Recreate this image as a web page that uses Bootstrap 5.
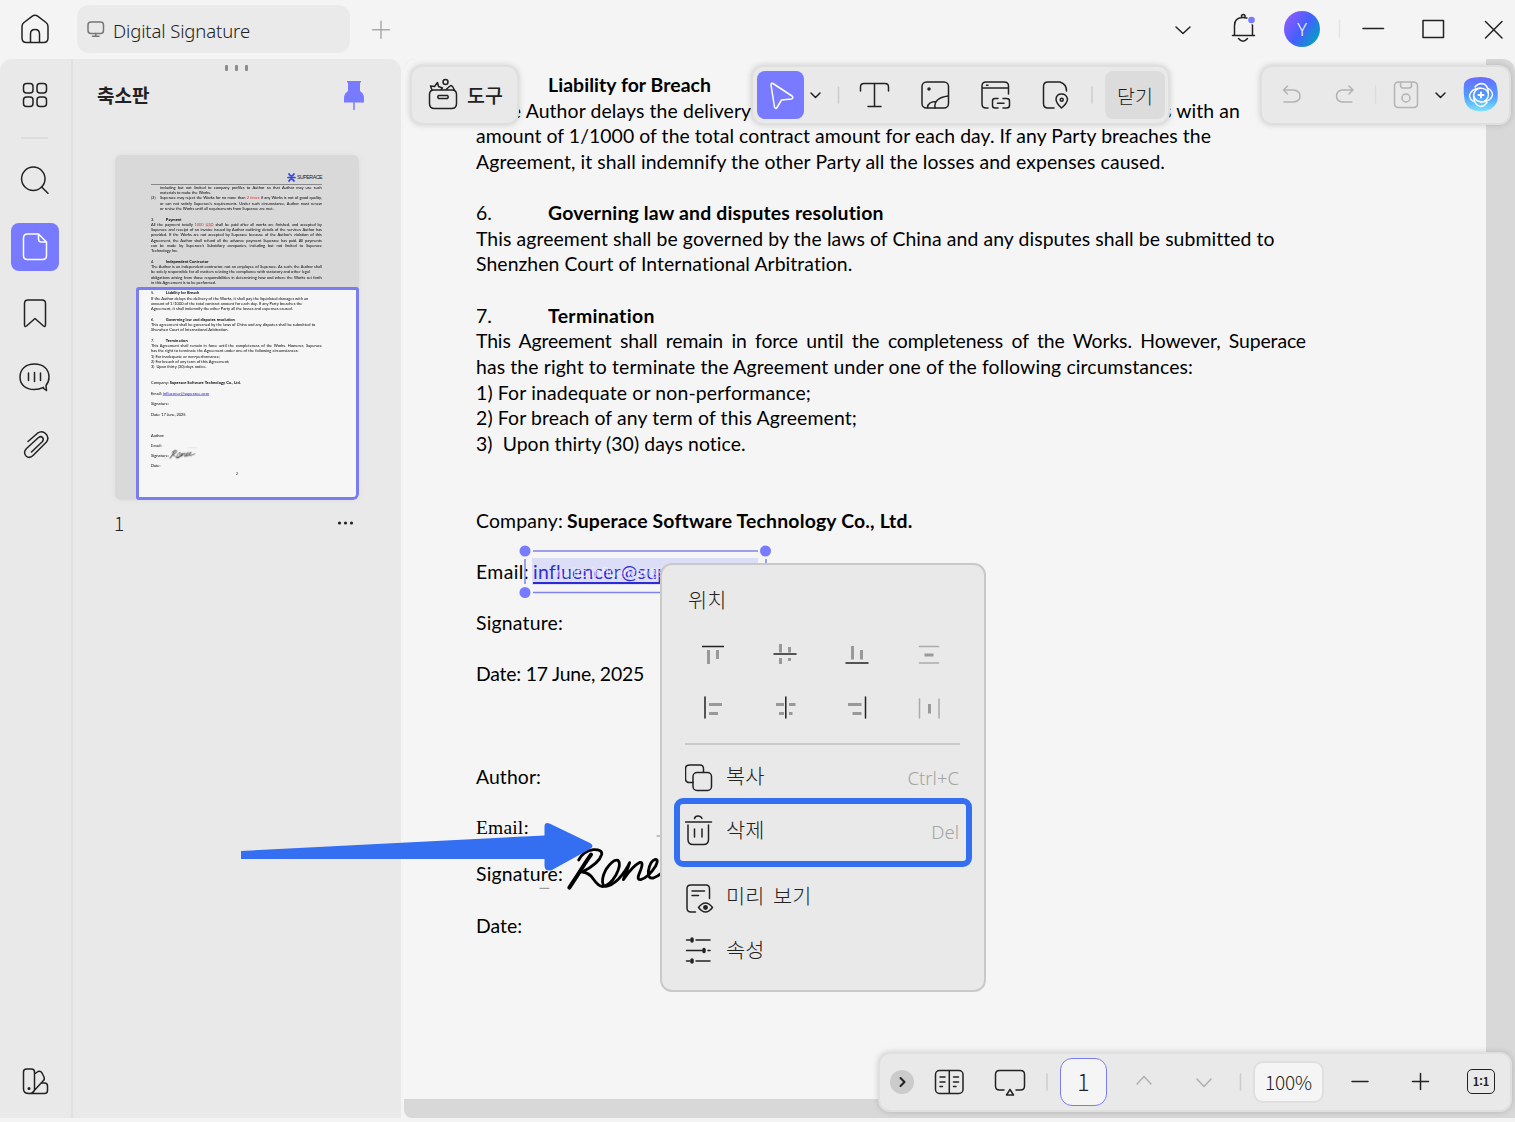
<!DOCTYPE html>
<html lang="ko">
<head>
<meta charset="utf-8">
<title>Digital Signature</title>
<link href="https://cdn.jsdelivr.net/npm/bootstrap@5.3.0/dist/css/bootstrap.min.css" rel="stylesheet">
<style>
body{background:#f4f4f4;color:#222;font-family:"Noto Sans","Noto Sans CJK KR",sans-serif;width:1515px;height:1122px;overflow:hidden}
svg{display:block;flex:none;fill:none;stroke:#222;stroke-width:1.5;stroke-linecap:round;stroke-linejoin:round}
.ko{font-family:"Noto Sans CJK KR",sans-serif}
.titlebar{height:59px}
.home{margin-left:18px}
.tab-pill{width:273px;height:48px;border-radius:12px;background:#eaeaea;margin:5px 16px 0 26px;padding-left:10px}
.tab-name{font-family:"Noto Sans","Open Sans",sans-serif;font-weight:300;font-size:18.5px;margin-left:8px;padding-top:3px}
.avatar{width:36px;height:36px;margin:11px 0 0 11px;background:linear-gradient(125deg,#a05cff 0,#465eff 50%,#00a4bd 90%);font-size:18px;font-weight:300}
.bell{margin-left:10px}
.fit{display:inline-block;white-space:nowrap}
.workspace{height:1059px}
.side{width:401px;background:#e9e9e9;border-radius:12px 12px 0 0}
.rail{width:73px;border-right:2px solid #e1e1e1}
.rail hr{width:27px;height:2px;border:0;background:#dcdcdc;opacity:1;margin:18px 0 17px 21px}
.rail svg{margin-left:11px}
.tool-on{background:#787bff;border-radius:8px}
.tool-on svg,.rail svg.tool-on{stroke:#fff}
.grips{height:18px;gap:7px;padding-right:2px;margin-bottom:1px}
.grips i{width:3px;height:6px;border-radius:1px;background:#8c8c8c}
.panel-head{width:328px;height:36px;padding:0 36px 0 24px;font-size:19px;font-weight:600}
.panel-head span{position:relative;top:-1px}
.thumb{width:244px;height:345px;margin:41px 0 0 42px;background:#d9d9d9;border-radius:6px;box-shadow:0 0 6px rgba(0,0,0,.05);position:relative;overflow:hidden}
.viewport-box{position:absolute;left:21px;top:132px;width:223px;height:213px;border:3px solid #7a7df0;border-radius:3px 3px 6px 3px;background:#f6f6f6}
.mini{position:absolute!important;left:36px;top:29.5px;width:830px;transform:scale(.2058);transform-origin:0 0}
.mini-logo{position:absolute;left:36px;top:17px;width:171px;height:13px;border-bottom:1px solid #888;font:5.3px "Liberation Sans",sans-serif;color:#222}
.thumb-foot{width:244px;margin:5px 0 0 41px;padding-right:4px;height:36px;font-size:19px;font-weight:300}
.stage{flex:1;margin-left:3px;background:#d8d8d8;position:relative;border-radius:12px 12px 0 8px}
.sheet{width:1082px;height:1040px;background:#f5f5f5;padding:14px 0 0 72px;border-radius:12px 0 0 0}
.doc{font-family:Lato,Carlito,sans-serif;font-size:19.4px;color:#000;position:relative;width:830px}
.ln{height:25.63px;line-height:24.4px;white-space:nowrap}
.num{display:inline-block;width:72px}
.just{text-align-last:justify;white-space:normal;letter-spacing:-.12px}
.ind{margin-left:44px}
.serif{font-family:"Liberation Serif",serif;font-size:19.5px}
.maillink{color:#1a17c9;text-decoration:underline;text-decoration-thickness:1.5px;text-underline-offset:3px;margin-left:4px}
.ink{position:absolute;left:-246px;top:737px;overflow:visible}
.pageno{position:absolute;left:413px;top:878px;font-size:16px}
.red{color:#e22b2b}
.bar{position:absolute;background:#e9e9e9;border:2px solid #dfdfdf;border-radius:12px;box-shadow:0 0 6px rgba(0,0,0,.16);height:60px}
.bar>*{margin-top:-1px}
.bar-tools{left:6px;top:6px;width:109px}
.bar-edit{left:347px;top:6px;width:419px}
.bar-right{left:856px;top:6px;width:251px}
.bar-view{left:474px;top:993px;width:634px}
.bar-tools span{font-size:19.5px;margin-left:1px}
.close-btn{width:60px;height:48px;border-radius:8px;background:#dcdcdc;font-size:19.5px;font-weight:300;margin-left:6px}
.close-btn b{font-weight:300;position:relative;top:1px}
.page-box{width:47px;height:48px;border:1.5px solid #7a7df0;border-radius:12px;background:#f5f5f5;font-size:23px;font-weight:300}
.zoom-box{width:71px;height:42px;border:2px solid #dfdfdf;border-radius:10px;background:#f5f5f5;font-size:19px;font-weight:300}
.zoom-box b{font-weight:300;position:relative;top:1px}
.one-box{width:28px;height:25px;border:1.7px solid #222;border-radius:5px;font-size:11px;font-weight:700;line-height:1;margin-left:1px}
.sel{position:absolute;left:113px;top:484px}
.ghost{position:absolute;left:148px;top:506px;font-size:12px;color:#f0f0ff;opacity:.85;line-height:16px}
.ctx{position:absolute;left:256px;top:504px;width:326px;height:429px;background:#e9e9e9;border:2px solid #c9c9c9;border-radius:12px;font-family:"Noto Sans CJK KR",sans-serif;font-weight:300;font-size:20.8px;padding:0 24px 0 23px}
.ctx-title{height:72px;padding:0 0 2px 3px}
.ctx-row{height:36px;margin-bottom:18px;padding-left:9px;gap:34px}
.ctx hr{margin:-2px 0 5px;border:0;height:2px;background:#cacaca;opacity:1}
.ctx-item{height:54px}
.ctx-item span{padding-bottom:3px}
.ctx-item kbd{font:300 18.5px "Noto Sans","Open Sans",sans-serif;background:none;color:#a4a4a4;padding:0 1px 0 0}
.focus-frame{position:absolute;left:270px;top:739px;width:298px;height:69px;border:6px solid #356ff1;border-radius:9px}
.arrow{position:absolute;left:-164px;top:761px}
</style>
<script src="https://cdn.jsdelivr.net/npm/bootstrap@5.3.0/dist/js/bootstrap.bundle.min.js"></script>
</head>
<body>
<header class="titlebar d-flex">
  <svg class="home" width="33" height="59" viewBox="18 0 33 59"><path d="M22 26.500Q22 24 24 22.500L32 16.300Q35 14.200 38 16.300L46 22.500Q48 24 48 26.500V38Q48 42.500 43.500 42.500H26.500Q22 42.500 22 38ZM30.500 42V34Q30.500 29.500 35 29.500T39.500 34V42"/></svg>
  <div class="tab-pill d-flex align-items-center">
    <svg width="18" height="48" viewBox="87 5 18 48"><rect x="88" y="22" width="15.500" height="11.500" rx="3" stroke="#777"/><path d="M95.700 33.500V36M92.500 36.300H99" stroke="#777"/></svg>
    <span class="fit tab-name" data-w="137">Digital Signature</span>
  </div>
  <svg width="30" height="59" viewBox="366 0 30 59"><path d="M372.500 29.800H389.500M381 21.300V38.300" stroke="#aaa"/></svg>
  <div class="ms-auto d-flex">
    <svg width="40" height="59" viewBox="1163 0 40 59"><path d="M1176 27L1183 33.500L1190 27"/></svg>
    <svg class="bell" width="60" height="59" viewBox="1213 0 60 59"><path d="M1234.500 35V25.500Q1234.500 17.500 1243 17.500T1252.500 25.500V35M1232.500 35.500H1254.500M1241.500 17V15.500Q1243.300 13.500 1245 15.500V17M1238.500 38.500Q1243 44 1247.500 38.500"/><circle cx="1251.500" cy="20" r="4.500" fill="#f4f4f4" stroke="none"/><circle cx="1251.500" cy="20" r="3.300" fill="#787bff" stroke="none"/></svg>
    <span class="avatar rounded-circle d-flex align-items-center justify-content-center text-white">Y</span>
    <svg width="195" height="59" viewBox="1320 0 195 59"><path d="M1339.500 20V37" stroke="#e4e4e4"/><path d="M1363 28.500H1383.500M1423 20.500H1443.500V37.500H1423ZM1485.500 21.500L1502 38M1502 21.500L1485.500 38"/></svg>
  </div>
</header>

<main class="workspace d-flex">
  <aside class="side d-flex">
    <nav class="rail d-flex flex-column">
      <svg style="margin-top:12px" width="48" height="48" viewBox="11 71 48 48"><rect x="23.500" y="83.500" width="9.500" height="9.500" rx="3"/><rect x="37" y="83.500" width="9.500" height="9.500" rx="3"/><rect x="23.500" y="97" width="9.500" height="9.500" rx="3"/><rect x="37" y="97" width="9.500" height="9.500" rx="3"/></svg>
      <hr>
      <svg width="48" height="48" viewBox="11 156 48 48"><circle cx="33.300" cy="178.700" r="11.700"/><path d="M41.600 187L48 193.300"/></svg>
      <svg class="tool-on" style="margin-top:19px" width="48" height="48" viewBox="11 223 48 48"><path d="M27.500 234H38.500L46.500 242V255.500Q46.500 259.500 42.500 259.500H27.500Q23.500 259.500 23.500 255.500V238Q23.500 234 27.500 234ZM38.500 234V239Q38.500 242 41.500 242H46.500"/></svg>
      <svg style="margin-top:18px" width="48" height="48" viewBox="11 289 48 48"><path d="M28 300H42Q45.500 300 45.500 303.500V324.500Q45.500 327.500 43.500 326L35 318.500L26.500 326Q24.500 327.500 24.500 324.500V303.500Q24.500 300 28 300Z"/></svg>
      <svg style="margin-top:16px" width="48" height="48" viewBox="11 353 48 48"><path d="M43.500 388.500L46.500 390.500L46 385.500Q49 382 49 377C49 369 43 364 34.500 364S20 369 20 377S26 389.500 34 389.500Q39.500 389.500 43.500 387.300ZM28.500 373V380.500M34.500 372.500V381.500M40.500 373V380.500"/></svg>
      <svg style="margin-top:19px" width="48" height="48" viewBox="11 420 48 48"><path d="M28 441.500L37.500 433.200Q42 430 45.800 433.700Q49.500 437.500 46.500 442L33 455.500Q29.500 459 26 456Q22.800 452.500 26.500 448.500L38.500 437.500Q41 435.800 42.500 437.500T42.500 441.500L31.500 452"/></svg>
      <svg class="mt-auto" style="margin-bottom:13px" width="48" height="48" viewBox="11 1057 48 48"><path d="M26.500 1069H31.500Q34.500 1069 34.500 1072V1089Q34.500 1093.500 29 1093.500T23.500 1089V1072Q23.500 1069 26.500 1069ZM34.500 1074L38 1071.500Q40.500 1070.500 42 1073L44 1077Q45 1079.500 43 1081L32 1093M41.500 1083H44.500Q47.500 1083 47.500 1086V1090.500Q47.500 1093.500 44.500 1093.500H30"/><circle cx="29" cy="1088.500" r=".8"/></svg>
    </nav>
    <section>
      <div class="grips d-flex justify-content-center align-items-center"><i></i><i></i><i></i></div>
      <div class="panel-head ko d-flex align-items-center justify-content-between"><span>축소판</span><svg width="22" height="32" viewBox="343 80 22 32"><path d="M347 81H361V82.500H360V91Q364 93.500 364 98V102.500H344V98Q344 93.500 348 91V82.500H347Z" fill="#787bff" stroke="none"/><path d="M354 102V109.500" stroke="#787bff"/></svg></div>
      <div class="thumb">
        <div class="viewport-box"></div>
        <div class="mini-logo"><svg style="position:absolute;left:136px;top:1px" width="9" height="9" viewBox="0 0 9 9"><path d="M2 1Q4.500 5 7 1M2 8Q4.500 4 7 8M1 4.500H8" stroke="#3344dd" stroke-width="1.700"/></svg><span class="fit" data-w="25" style="position:absolute;left:146px;top:2px">SUPERACE</span></div>
        <div class="mini doc" id="mini">
          <div class="ln just ind">including but not limited to company profiles to Author so that Author may use such</div>
          <div class="ln ind">materials to make the Works.</div>
          <div class="ln d-flex"><span style="width:44px">(3)</span><span class="just flex-fill">Superace may reject the Works for no more than <span class="red">2 times</span> if any Works is not of good quality,</span></div>
          <div class="ln just ind">or can not satisfy Superace's requirements. Under such circumstance, Author must renew</div>
          <div class="ln ind">or revise the Works until all requirements from Superace are met.</div>
          <div class="ln"></div>
          <div class="ln"><span class="num">3.</span><b>Payment</b></div>
          <div class="ln just">All the payment totally <span class="red">1000 <u>USD</u></span> shall be paid after all works are finished, and accepted by</div>
          <div class="ln just">Superace and receipt of an invoice issued by Author outlining details of the services Author has</div>
          <div class="ln just">provided. If the Works are not accepted by Superace because of the Author's violation of this</div>
          <div class="ln just">Agreement, the Author shall refund all the advance payment Superace has paid. All payments</div>
          <div class="ln just">can be made by Superace's Subsidiary companies, including but not limited to Superace</div>
          <div class="ln">Technology Inc.</div>
          <div class="ln"></div>
          <div class="ln"><span class="num">4.</span><b>Independent Contractor</b></div>
          <div class="ln just">The Author is an independent contractor, not an employee of Superace. As such, the Author shall</div>
          <div class="ln"><span class="fit" data-w="772">be solely responsible for all matters relating the compliance with statutory and other legal</span></div>
          <div class="ln just">obligations arising from those responsibilities in determining how and where the Works set forth</div>
          <div class="ln">in this Agreement is to be performed.</div>
          <div class="ln"></div>
        </div>
      </div>
      <div class="thumb-foot ko d-flex align-items-center justify-content-between"><span>1</span><svg width="18" height="10" viewBox="0 0 18 10"><g fill="#222" stroke="none"><circle cx="3.500" cy="5" r="1.600"/><circle cx="9.500" cy="5" r="1.600"/><circle cx="15.500" cy="5" r="1.600"/></g></svg></div>
    </section>
  </aside>

  <section class="stage">
    <article class="sheet">
      <div class="doc" id="lines">
        <div class="ln"><span class="num">5.</span><b class="fit" data-w="163">Liability for Breach</b></div>
        <div class="ln"><span class="fit" data-w="764">If the Author delays the delivery of the Works, it shall pay the liquidated damages with an</span></div>
        <div class="ln"><span class="fit" data-w="735">amount of 1/1000 of the total contract amount for each day. If any Party breaches the</span></div>
        <div class="ln"><span class="fit" data-w="689">Agreement, it shall indemnify the other Party all the losses and expenses caused.</span></div>
        <div class="ln"></div>
        <div class="ln"><span class="num">6.</span><b class="fit" data-w="336">Governing law and disputes resolution</b></div>
        <div class="ln"><span class="fit" data-w="798">This agreement shall be governed by the laws of China and any disputes shall be submitted to</span></div>
        <div class="ln"><span class="fit" data-w="377">Shenzhen Court of International Arbitration.</span></div>
        <div class="ln"></div>
        <div class="ln"><span class="num">7.</span><b class="fit" data-w="107">Termination</b></div>
        <div class="ln just">This Agreement shall remain in force until the completeness of the Works. However, Superace</div>
        <div class="ln"><span class="fit" data-w="717">has the right to terminate the Agreement under one of the following circumstances:</span></div>
        <div class="ln"><span class="fit" data-w="335">1) For inadequate or non-performance;</span></div>
        <div class="ln"><span class="fit" data-w="381">2) For breach of any term of this Agreement;</span></div>
        <div class="ln"><span class="fit" data-w="270">3)&nbsp; Upon thirty (30) days notice.</span></div>
        <div class="ln"></div><div class="ln"></div>
        <div class="ln"><span class="fit" data-w="87">Company:</span><b class="fit" data-w="345" style="margin-left:4px">Superace Software Technology Co., Ltd.</b></div>
        <div class="ln"></div>
        <div class="ln"><span class="fit" data-w="53">Email:</span><span class="fit maillink" data-w="225">influencer@superace.com</span></div>
        <div class="ln"></div>
        <div class="ln"><span class="fit" data-w="87">Signature:</span></div>
        <div class="ln"></div>
        <div class="ln"><span class="fit" data-w="168">Date: 17 June, 2025</span></div>
        <div class="ln"></div><div class="ln"></div><div class="ln"></div>
        <div class="ln"><span class="fit" data-w="65">Author:</span></div>
        <div class="ln"></div>
        <div class="ln serif"><span class="fit" data-w="53">Email:</span></div>
        <div class="ln" style="height:20.500px"></div>
        <div class="ln"><span class="fit" data-w="87">Signature:</span></div>
        <div class="ln"></div>
        <div class="ln"><span class="fit" data-w="46">Date:</span></div>
        <span class="pageno">2</span>
        <svg class="ink" width="540" height="130" viewBox="0 0 1620 390"><g stroke="#000" stroke-width="8.500">
          <path d="M1018 233Q1040 200 1062 165Q1075 145 1083 134" stroke-width="12"/>
          <path d="M1046 150Q1060 123 1090 119Q1118 118 1115 133Q1108 160 1056 186Q1078 188 1090 207Q1105 229 1118 230Q1140 226 1158 195Q1175 162 1164 151Q1150 146 1128 178Q1112 208 1120 226Q1135 236 1165 208Q1188 183 1199 158Q1190 187 1180 209Q1208 168 1230 157Q1243 155 1228 190Q1219 210 1232 209Q1255 203 1277 168Q1287 148 1276 148Q1260 152 1255 184Q1253 207 1270 204Q1294 196 1315 165Q1328 143 1316 143Q1298 152 1297 182Q1300 203 1320 195Q1350 180 1375 170"/>
          <path d="M930 235H957M1281 78H1350M1365 82H1400" stroke="#777" stroke-width="2.500"/></g></svg>
      </div>
    </article>

    <svg class="sel" width="256" height="60" viewBox="517 543 256 60"><rect x="532" y="558" width="226" height="27" fill="#787bff" fill-opacity=".2" stroke="none"/><path d="M533 551H758M533 592.500H758M525 559V584M766 559V584" stroke="#7f82ea" stroke-linecap="butt"/><g fill="#787bff" stroke="none"><circle cx="525" cy="551" r="5.500"/><circle cx="765.500" cy="551" r="5.500"/><circle cx="525" cy="592.500" r="5.500"/></g></svg>
    <span class="ghost">mailto:influencer@superace.com</span>

    <div class="bar bar-tools d-flex align-items-center">
      <svg width="54" height="56" viewBox="412 67 54 56"><path d="M434 90H452Q456.500 90 456.500 94.500V103.500Q456.500 108.500 451.500 108.500H434.500Q429.500 108.500 429.500 103.500V94.500Q429.500 90 434 90ZM438.500 95.500H447.500Q449 97 447.500 98.500H438.500Q437 97 438.500 95.500ZM432 90L430.500 86L434.500 86.500L437.500 82.500L438.500 86.500L442.500 88L440.500 90M445.500 90L450 86Q451.500 85 452.500 86.500L455 91"/><circle cx="445.500" cy="82" r="2.500"/></svg>
      <span class="ko fw-medium">도구</span>
    </div>

    <div class="bar bar-edit d-flex align-items-center">
      <span class="tool-on" style="margin-left:4px"><svg width="47" height="48" viewBox="757 71 47 48"><path d="M773 83.500Q771 82.500 771 85L774.500 107Q775.500 109.500 777 107.500L781.500 100L791.500 99Q794 98 792 96Z"/></svg></span>
      <svg width="28" height="48" viewBox="804 71 28 48"><path d="M811 93L815.500 97.500L820 93"/></svg>
      <svg width="14" height="48" viewBox="832 71 14 48"><path d="M838.500 87V103" stroke="#ccc"/></svg>
      <svg width="58" height="48" viewBox="846 71 58 48"><path d="M860.500 91V87Q860.500 83.500 864 83.500H885Q888.500 83.500 888.500 87V91M874.500 83.500V106.500M868 106.500H881"/></svg>
      <svg width="61" height="48" viewBox="904 71 61 48"><rect x="922" y="82" width="26.500" height="26" rx="4.500"/><circle cx="929" cy="89" r="1"/><path d="M935 108Q933.500 98 948 96M927.500 107.500Q928 101.500 936.500 101.500"/></svg>
      <svg width="60" height="48" viewBox="965 71 60 48"><path d="M988 108H986Q982 108 982 104V86Q982 82 986 82H1004Q1008.500 82 1008.500 86V94M982 88H1008.500M986.500 85.300H988M998 98.500H995Q992.500 98.500 992.500 101V105.500Q992.500 108 995 108H998M1003 98.500H1006.500Q1009.500 98.500 1009.500 101V105.500Q1009.500 108 1006.500 108H1003M997.500 103.300H1004"/></svg>
      <svg width="60" height="48" viewBox="1025 71 60 48"><path d="M1054 108H1048Q1043.500 108 1043.500 103.500V86.500Q1043.500 82 1048 82H1060Q1066.500 84 1066.500 91M1061.500 108Q1056 103 1056 99Q1056.500 94 1061.500 94T1067.500 99Q1067.500 103 1061.500 108Z"/><circle cx="1061.700" cy="99.700" r="1.500"/></svg>
      <svg width="14" height="48" viewBox="1085 71 14 48"><path d="M1092 87V103" stroke="#ccc"/></svg>
      <span class="close-btn ko d-flex align-items-center justify-content-center"><b>닫기</b></span>
    </div>

    <div class="bar bar-right d-flex align-items-center">
      <svg width="190" height="48" viewBox="1262 71 190 48"><g stroke="#b3b3b3"><path d="M1287.500 86L1283.500 90L1287.500 94M1283.500 90H1294Q1300 91 1300 96T1294 102H1284M1349 86L1353 90L1349 94M1353 90H1342Q1336.500 91 1336.500 96T1342 102H1352"/><path d="M1375.500 86V103" stroke="#ddd"/><path d="M1399 82H1413Q1417.500 82 1417.500 86V103.500Q1417.500 107.500 1413.500 107.500H1398.500Q1394.500 107.500 1394.500 103.500V86Q1394.500 82 1399 82ZM1400.500 82V85.500Q1401 88 1403 88H1409Q1411.500 88 1411.500 85.500V82"/><circle cx="1406" cy="98" r="4"/></g><path d="M1436 93L1440.500 97.500L1445 93"/></svg>
      <svg width="54" height="48" viewBox="1452 71 54 48"><defs><linearGradient id="ai" x2="0" y2="1"><stop stop-color="#6a6cff"/><stop offset=".55" stop-color="#4f9bff"/><stop offset="1" stop-color="#7ce4f8"/></linearGradient></defs><path d="M1464 84Q1466 77 1481 77Q1492 77 1496 83Q1499 94 1497 102Q1493 111 1481 111.500Q1468 111 1465 102Q1463 92 1464 84Z" fill="url(#ai)" stroke="none"/><g stroke="#fff" stroke-width="1.400"><path d="M1475 87Q1478 83.500 1481.500 83.500Q1488 84 1488.500 93.500Q1488.500 101 1481 102.500M1488.500 88.500Q1492.500 91 1492.500 95Q1491 101 1482.500 102Q1475 102 1473.500 95M1487 102.500Q1484 106.500 1480.500 106.500Q1474 105 1473.500 96Q1474 89 1481 88M1473.500 101.500Q1469.500 99 1469.500 95.500Q1471 89 1479.500 88Q1487 88 1488.500 94"/><path d="M1481 92.500V97.500M1478.500 95H1483.500" stroke-width="2"/></g></svg>
    </div>

    <div class="ctx">
      <div class="ctx-title d-flex align-items-center">위치</div>
      <div class="ctx-row d-flex">
        <svg width="38" height="36" viewBox="0 0 38 36"><path d="M8 9.500H30" stroke-linecap="butt"/><path d="M14.500 13V27M23.500 13V22" stroke="#999" stroke-width="3" stroke-linecap="butt"/></svg>
        <svg width="38" height="36" viewBox="0 0 38 36"><path d="M14.500 7V15.500M14.500 21V27M23.500 10V15.500M23.500 21V24" stroke="#999" stroke-width="3" stroke-linecap="butt"/><path d="M8 17H30"/></svg>
        <svg width="38" height="36" viewBox="0 0 38 36"><path d="M8 26H30"/><path d="M14.500 9V22.500M23.500 13V22.500" stroke="#999" stroke-width="3" stroke-linecap="butt"/></svg>
        <svg width="38" height="36" viewBox="0 0 38 36"><path d="M9.500 9.500H28.500M9.500 26H28.500" stroke="#aaa"/><path d="M14.500 18H23.500" stroke="#999" stroke-width="3" stroke-linecap="butt"/></svg>
      </div>
      <div class="ctx-row d-flex">
        <svg width="38" height="36" viewBox="0 1 38 36"><path d="M11 7V28"/><path d="M15 14.500H28M15 23.500H24" stroke="#999" stroke-width="3" stroke-linecap="butt"/></svg>
        <svg width="38" height="36" viewBox="0 1 38 36"><path d="M10 14.500H18M23 14.500H29.500M13 23.500H18M23 23.500H26.500" stroke="#999" stroke-width="3" stroke-linecap="butt"/><path d="M19.800 7V28"/></svg>
        <svg width="38" height="36" viewBox="0 1 38 36"><path d="M27.500 7V28"/><path d="M10 14.500H23.500M14.500 23.500H23.500" stroke="#999" stroke-width="3" stroke-linecap="butt"/></svg>
        <svg width="38" height="36" viewBox="0 1 38 36"><path d="M9.500 9V28M29 9V28" stroke="#aaa"/><path d="M19.500 14V23.500" stroke="#999" stroke-width="3" stroke-linecap="butt"/></svg>
      </div>
      <hr>
      <div class="ctx-item d-flex align-items-center"><svg width="41" height="54" viewBox="685 750.500 41 54"><path d="M693 783H689.500Q685.500 783 685.500 779V769.500Q685.500 765.500 689.500 765.500H700Q703.500 765.500 703.500 769.500V772.500"/><rect x="693" y="773" width="18.500" height="18" rx="4"/></svg><span>복사</span><kbd class="ms-auto">Ctrl+C</kbd></div>
      <div class="ctx-item d-flex align-items-center"><svg width="41" height="54" viewBox="685 804.500 41 54"><path d="M685.500 822.500H711.500M694.500 819Q695 816.500 698 816.500T702 819M688 825.500V840Q688 845 693 845H703.500Q708.500 845 708.500 840V825.500M694.500 829.500V837.500M702 829.500V837.500"/></svg><span>삭제</span><kbd class="ms-auto">Del</kbd></div>
      <div class="ctx-item d-flex align-items-center" style="margin-top:12px"><svg width="41" height="54" viewBox="685 870.500 41 54"><path d="M695.500 912.500H691Q687 912.500 687 908.500V889Q687 885.500 691 885.500H706Q709.500 885.500 709.500 889.500V899M692 891.500H704.500M692 896H698.500M698.500 908Q705.500 899 712.500 908Q705.500 917 698.500 908Z"/><circle cx="705.500" cy="908" r="1.700" fill="#222"/></svg><span style="word-spacing:3px">미리 보기</span></div>
      <div class="ctx-item d-flex align-items-center"><svg width="41" height="54" viewBox="685 924.500 41 54"><path d="M686.500 940.500H690M696 940.500H710M686.500 951H702M708 951H710M686.500 961.500H690M696 961.500H710"/><path d="M692 939.500V941.500M704 950V952M692 960.500V962.500" stroke-width="3.500"/></svg><span>속성</span></div>
    </div>
    <div class="focus-frame"></div>
    <svg class="arrow" width="356" height="56" viewBox="240 820 356 56"><path d="M241 851L544.500 835.500V826Q545 821.500 549.500 823.500L590 843Q595 846 590 849L552 870Q545 872 544.500 866V859H241Z" fill="#356ff1" stroke="none"/></svg>

    <div class="bar bar-view d-flex align-items-center">
      <svg width="180" height="56" viewBox="880 1054 180 56"><circle cx="902" cy="1082" r="12" fill="#cbcbcb" stroke="none"/><path d="M900.500 1078L904.500 1082L900.500 1086" stroke-width="2"/><rect x="935.500" y="1070.500" width="27.500" height="23" rx="4"/><path d="M949.300 1071V1093M940 1077H945M940 1082H945M940 1086.500H942.500M953.500 1077H958.500M953.500 1082H958.500M953.500 1086.500H956M1004 1090H999.500Q995.500 1090 995.500 1086V1074.500Q995.500 1070.500 999.500 1070.500H1020.500Q1024.500 1070.500 1024.500 1074.500V1086Q1024.500 1090 1020.500 1090H1016M1010 1089.500L1013.500 1095H1006.500Z"/><path d="M1047 1074V1090" stroke="#ccc"/></svg>
      <span class="page-box d-flex align-items-center justify-content-center ko">1</span>
      <svg width="146" height="56" viewBox="1107 1054 146 56"><path d="M1137 1084L1144 1076.500L1151 1084M1197 1079L1204 1086.500L1211 1079" stroke="#b0b0b0"/><path d="M1240.500 1074V1090" stroke="#ccc"/></svg>
      <span class="zoom-box d-flex align-items-center justify-content-center ko"><b class="fit" data-w="47">100%</b></span>
      <svg width="142" height="56" viewBox="1324 1054 142 56"><path d="M1352 1081.500H1368M1412.500 1081.500H1428.500M1420.500 1073.500V1089.500"/></svg>
      <span class="one-box ko d-flex align-items-center justify-content-center">1:1</span>
    </div>
  </section>
</main>
<script>
// Spread each measured line to its typeset width, then mirror the page into the thumbnail.
document.querySelectorAll('.fit').forEach(function(el){
  el.style.letterSpacing=((el.dataset.w-el.getBoundingClientRect().width/(el.closest('.mini')?.2058:1))/el.textContent.length)+'px';
});
var mini=document.getElementById('mini');
Array.from(document.getElementById('lines').children).forEach(function(n){
  var c=n.cloneNode(true);
  if(c.matches('.ink,.pageno')) c.style.marginTop=20*25.63+'px';
  mini.appendChild(c);
});
</script>
</body>
</html>
